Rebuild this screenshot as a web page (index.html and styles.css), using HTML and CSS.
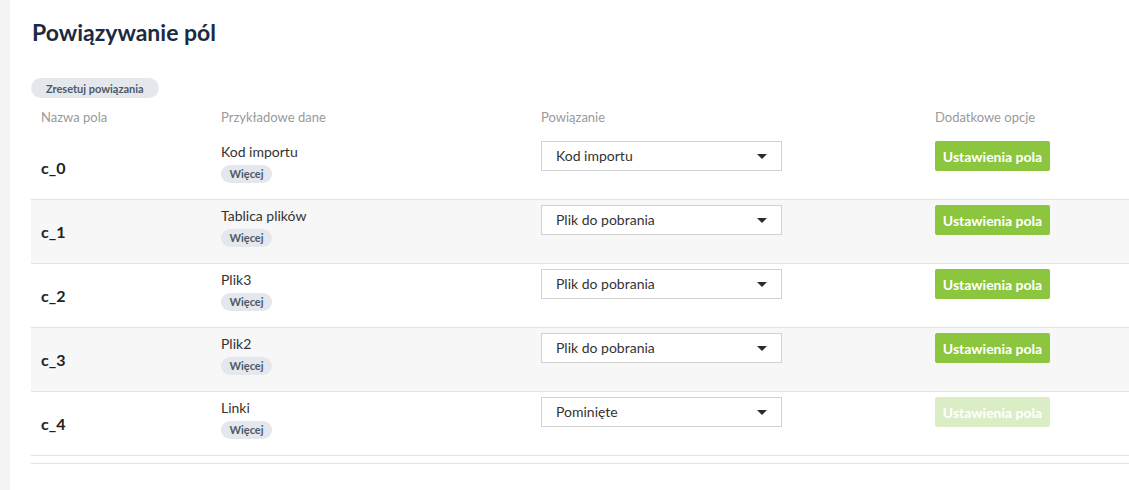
FILE: index.html
```html
<!DOCTYPE html>
<html lang="pl">
<head>
  <meta charset="UTF-8"/>
  <title>Powiązywanie pól</title>
  <link rel="stylesheet" href="styles.css">
</head>
<body>
  <div class="panel">
    <h1>Powiązywanie pól</h1>
    <button type="button" class="reset-btn">Zresetuj powiązania</button>

    <div class="map-table">
      <div class="map-row head">
        <div class="cell">Nazwa pola</div>
        <div class="cell">Przykładowe dane</div>
        <div class="cell">Powiązanie</div>
        <div class="cell">Dodatkowe opcje</div>
      </div>

      <div class="map-row">
        <div class="cell name">c_0</div>
        <div class="cell sample">Kod importu<span class="more">Więcej</span></div>
        <div class="cell"><div class="select">Kod importu<span class="caret"></span></div></div>
        <div class="cell"><button type="button" class="opt-btn">Ustawienia pola</button></div>
      </div>

      <div class="map-row">
        <div class="cell name">c_1</div>
        <div class="cell sample">Tablica plików<span class="more">Więcej</span></div>
        <div class="cell"><div class="select">Plik do pobrania<span class="caret"></span></div></div>
        <div class="cell"><button type="button" class="opt-btn">Ustawienia pola</button></div>
      </div>

      <div class="map-row">
        <div class="cell name">c_2</div>
        <div class="cell sample">Plik3<span class="more">Więcej</span></div>
        <div class="cell"><div class="select">Plik do pobrania<span class="caret"></span></div></div>
        <div class="cell"><button type="button" class="opt-btn">Ustawienia pola</button></div>
      </div>

      <div class="map-row">
        <div class="cell name">c_3</div>
        <div class="cell sample">Plik2<span class="more">Więcej</span></div>
        <div class="cell"><div class="select">Plik do pobrania<span class="caret"></span></div></div>
        <div class="cell"><button type="button" class="opt-btn">Ustawienia pola</button></div>
      </div>

      <div class="map-row">
        <div class="cell name">c_4</div>
        <div class="cell sample">Linki<span class="more">Więcej</span></div>
        <div class="cell"><div class="select">Pominięte<span class="caret"></span></div></div>
        <div class="cell"><button type="button" class="opt-btn" disabled>Ustawienia pola</button></div>
      </div>
    </div>
    <div class="table-foot"></div>
  </div>
</body>
</html>
```

FILE: styles.css
```css
body { margin:0; background:#f3f3f3; font-family:'Lato', 'Noto Sans', sans-serif; color:#333; display:flex; min-height:100vh; }
.panel { flex:1; margin-left:10px; background:#fff; padding:17px 0 0 21px; }
h1 { margin:0 0 31px 1px; font-size:23px; line-height:30px; color:#1b2a41; font-weight:700; }

.reset-btn {
  display:block;
  height:20px;
  padding:0 15px;
  border:none;
  border-radius:10px;
  background:#e4e7eb;
  color:#4c5a6b;
  font-family:inherit;
  font-size:11px;
  font-weight:700;
  cursor:pointer;
}

.map-row { display:grid; grid-template-columns:180px 320px 394px 1fr; height:63px; border-top:1px solid #e3e3e3; }
.map-row:nth-child(odd) { background:#f7f7f7; }
.map-row.head { height:38px; border-top:none; background:none; align-items:center; color:#9a9a9a; font-size:13px; }
.map-row:nth-child(2) { border-top:none; height:63px; }
.map-row:last-child { border-bottom:1px solid #e3e3e3; }
.cell { padding:5px 0 0 10px; }
.map-row.head .cell { padding-top:0; }
.cell.name { align-self:center; padding-top:0; font-weight:700; font-size:16px; color:#222; }
.cell.sample { font-size:14px; line-height:20px; padding-top:6px; color:#333; }

.more {
  display:block;
  width:51px;
  height:18px;
  margin-top:3px;
  border-radius:9px;
  background:#e4e7eb;
  color:#4c5a6b;
  font-size:11px;
  font-weight:700;
  line-height:18px;
  text-align:center;
}

.select {
  position:relative;
  box-sizing:border-box;
  width:241px;
  height:30px;
  border:1px solid #d2d2d2;
  background:#fff;
  padding-left:14px;
  font-size:14px;
  line-height:28px;
  color:#333;
}
.caret {
  position:absolute;
  right:14px;
  top:12px;
  border-left:5px solid transparent;
  border-right:5px solid transparent;
  border-top:5px solid #2b2b2b;
}

.opt-btn {
  width:115px;
  height:30px;
  border:none;
  border-radius:2px;
  background:#8cc63f;
  color:#fff;
  font-family:inherit;
  font-size:14px;
  font-weight:700;
  cursor:pointer;
}
.opt-btn:disabled { opacity:.3; cursor:default; }

.table-foot { margin-top:7px; border-top:1px solid #e3e3e3; }
```
